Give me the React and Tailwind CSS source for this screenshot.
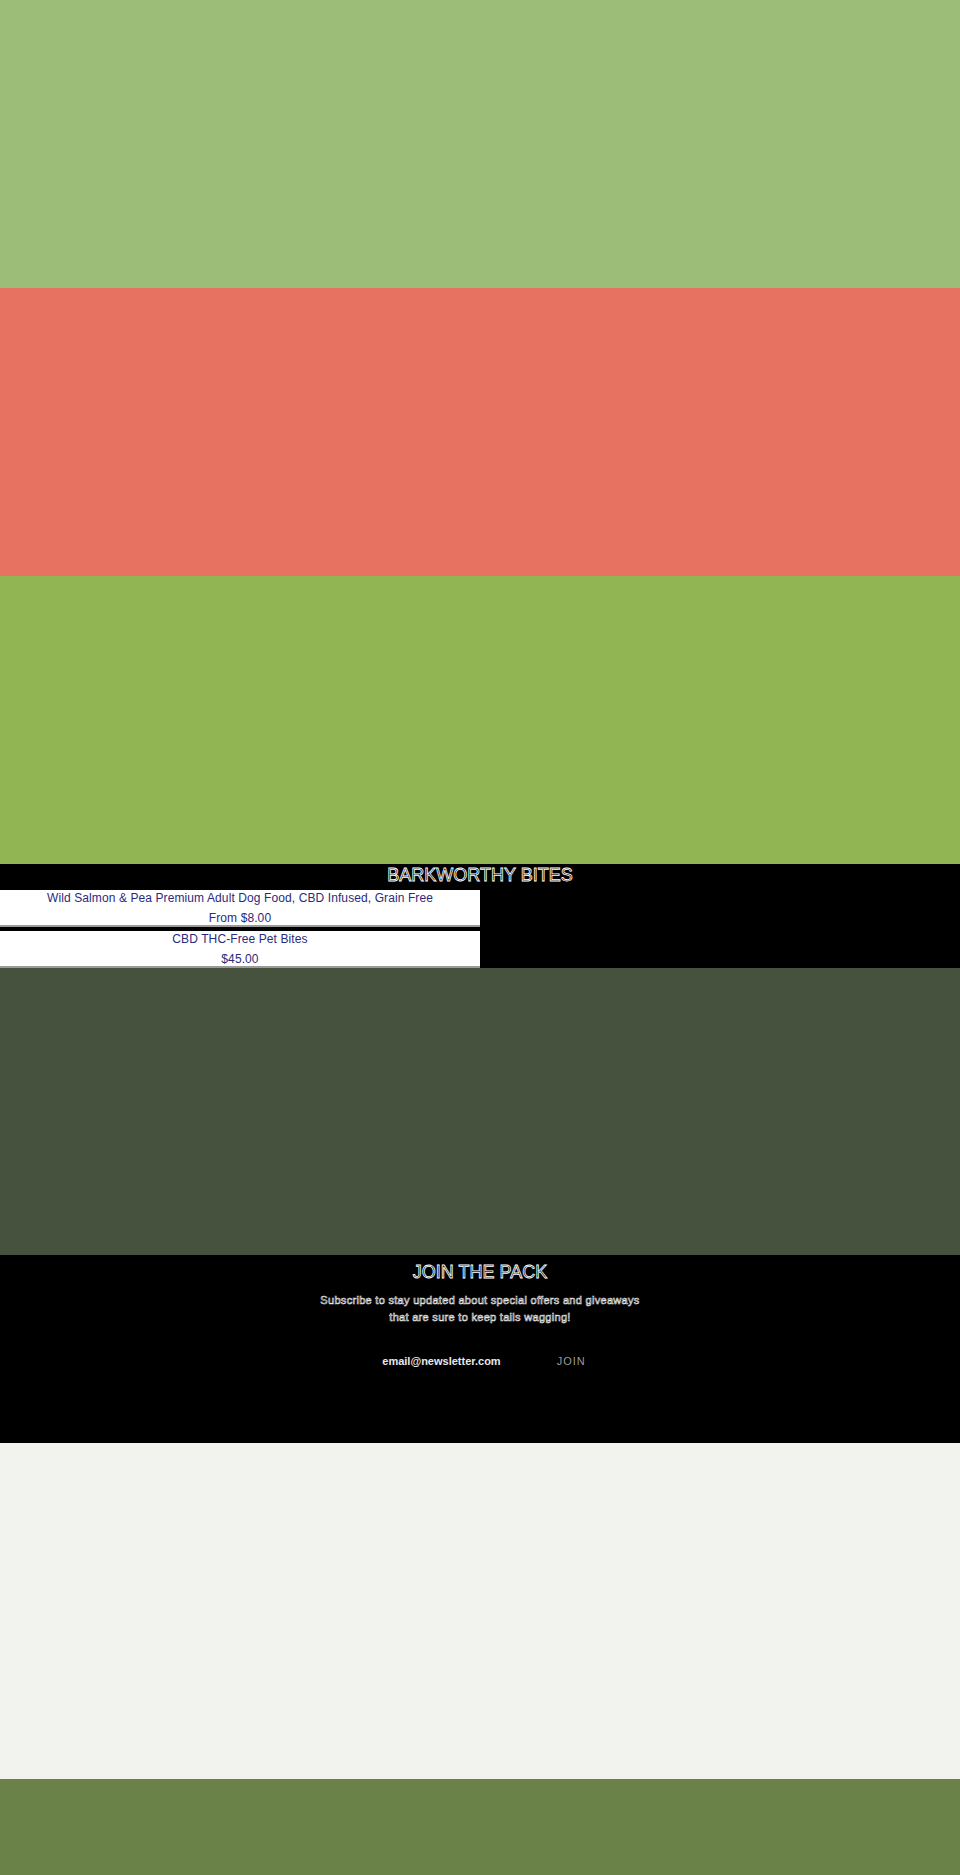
// App.jsx
const PRODUCTS = [
  { title: "Wild Salmon & Pea Premium Adult Dog Food, CBD Infused, Grain Free", price: "From $8.00" },
  { title: "CBD THC-Free Pet Bites", price: "$45.00" },
];

const outline = { WebkitTextStroke: "0.8px #ffffff", color: "transparent" };

export default function App() {
  return (
    <div className="w-[960px] font-['Liberation_Sans',Arial,sans-serif]">
      {/* hero blocks */}
      <div className="h-[288px] bg-[#9bbd77]" />
      <div className="h-[288px] bg-[#e87262]" />
      <div className="h-[288px] bg-[#92b553]" />

      {/* featured products */}
      <section className="h-[104px] bg-black">
        <h2
          className="h-[26px] text-center text-[18px] leading-[20px] pt-[1px] uppercase"
          style={outline}
        >
          Barkworthy Bites
        </h2>
        <div className="flex w-[480px] flex-col gap-[4px]">
          {PRODUCTS.map((p) => (
            <div
              key={p.title}
              className="flex h-[37px] flex-col items-center gap-[4px] border-b-2 border-[#9a9a9a] bg-white text-[12px] leading-[16px] tracking-[0.1px] text-[#2b2a7e]"
            >
              <p>{p.title}</p>
              <p>{p.price}</p>
            </div>
          ))}
        </div>
      </section>

      <div className="h-[287px] bg-[#46513e]" />

      {/* newsletter */}
      <section className="flex h-[188px] flex-col items-center bg-black pt-[6px]">
        <h2 className="text-[18px] leading-[22px] uppercase" style={outline}>
          Join the pack
        </h2>
        <p
          className="mt-[9px] text-center text-[11px] leading-[17px] tracking-[0.3px]"
          style={{ WebkitTextStroke: "0.6px #ececec", color: "transparent" }}
        >
          Subscribe to stay updated about special offers and giveaways
          <br />
          that are sure to keep tails wagging!
        </p>
        <form className="mt-[27px] flex items-center gap-[56px] pl-[8px]">
          <span className="text-[11px] leading-[16px] font-bold text-[#e8e8e8]">
            email@newsletter.com
          </span>
          <button
            type="button"
            className="text-[11px] leading-[16px] tracking-[1px] text-[#9a9a9a]"
          >
            JOIN
          </button>
        </form>
      </section>

      <div className="h-[336px] bg-[#f2f2ee]" />
      <div className="h-[96px] bg-[#6a8148]" />
    </div>
  );
}
